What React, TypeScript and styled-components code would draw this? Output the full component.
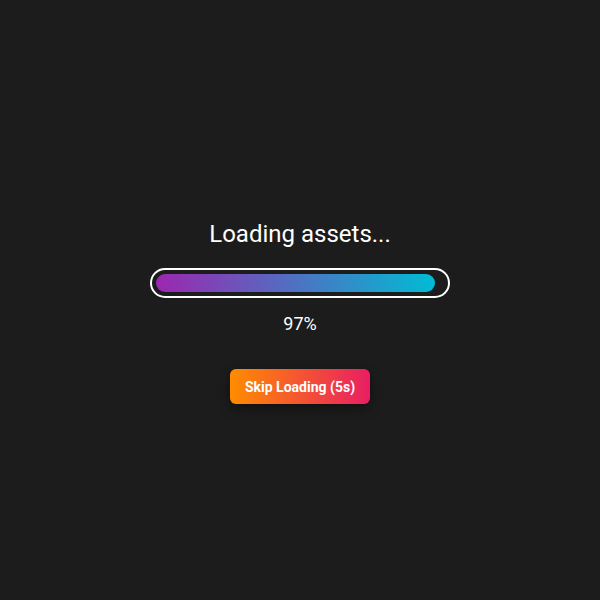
import styled, { createGlobalStyle } from 'styled-components';

const GlobalStyle = createGlobalStyle`
  html, body {
    margin: 0;
    padding: 0;
    background: #1c1c1c;
    font-family: Roboto, "Liberation Sans", sans-serif;
  }
`;

const Screen = styled.main`
  display: flex;
  flex-direction: column;
  align-items: center;
  box-sizing: border-box;
  width: 600px;
  height: 600px;
  padding-top: 220px;
  background: #1c1c1c;
`;

const Title = styled.h1`
  margin: 0 0 20px;
  font-size: 24px;
  line-height: 28px;
  font-weight: 400;
  color: #ffffff;
`;

const Track = styled.div`
  box-sizing: border-box;
  width: 300px;
  height: 30px;
  padding: 4px;
  border: 2px solid #ffffff;
  border-radius: 15px;
`;

const Fill = styled.div`
  height: 100%;
  border-radius: 9px;
  background: linear-gradient(90deg, #9c27b0, #00bcd4);
`;

const Percent = styled.p`
  margin: 14px 0 0;
  font-size: 18px;
  line-height: 24px;
  color: #ffffff;
`;

const SkipButton = styled.button`
  margin-top: 33px;
  width: 140px;
  height: 35px;
  border: none;
  border-radius: 6px;
  background: linear-gradient(90deg, #ff8c00, #e91e63);
  box-shadow: 0 4px 12px rgba(0, 0, 0, 0.45);
  color: #ffffff;
  font-family: Roboto, "Liberation Sans", sans-serif;
  font-size: 14px;
  font-weight: 700;
  cursor: pointer;
`;

export default function App() {
  const progress = 97;
  const seconds = 5;

  return (
    <>
      <GlobalStyle />
      <Screen>
        <Title>Loading assets...</Title>
        <Track>
          <Fill style={{ width: `${progress}%` }} />
        </Track>
        <Percent>{progress}%</Percent>
        <SkipButton>Skip Loading ({seconds}s)</SkipButton>
      </Screen>
    </>
  );
}
